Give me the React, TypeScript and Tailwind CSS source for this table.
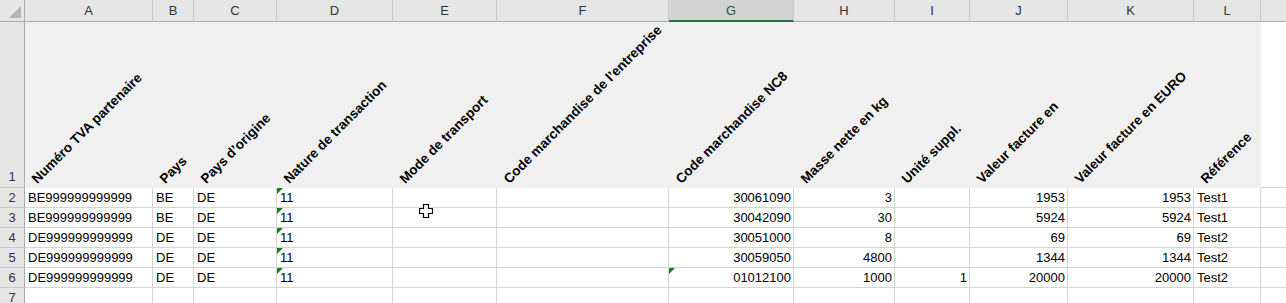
import React from "react";

type Col = { key: string; w: string; num?: boolean; label: string };

const cols: Col[] = [
  { key: "A", w: "w-[128px]", label: "Numéro TVA partenaire" },
  { key: "B", w: "w-[41px]", label: "Pays" },
  { key: "C", w: "w-[83px]", label: "Pays d’origine" },
  { key: "D", w: "w-[116px]", label: "Nature de transaction" },
  { key: "E", w: "w-[104px]", label: "Mode de transport" },
  { key: "F", w: "w-[172px]", label: "Code marchandise de l’entreprise" },
  { key: "G", w: "w-[125px]", num: true, label: "Code marchandise NC8" },
  { key: "H", w: "w-[101px]", num: true, label: "Masse nette en kg" },
  { key: "I", w: "w-[75px]", num: true, label: "Unité suppl." },
  { key: "J", w: "w-[98px]", num: true, label: "Valeur facture en" },
  { key: "K", w: "w-[126px]", num: true, label: "Valeur facture en EURO" },
  { key: "L", w: "w-[67px]", label: "Référence" },
];

const rows: string[][] = [
  ["BE999999999999", "BE", "DE", "11", "", "", "30061090", "3", "", "1953", "1953", "Test1"],
  ["BE999999999999", "BE", "DE", "11", "", "", "30042090", "30", "", "5924", "5924", "Test1"],
  ["DE999999999999", "DE", "DE", "11", "", "", "30051000", "8", "", "69", "69", "Test2"],
  ["DE999999999999", "DE", "DE", "11", "", "", "30059050", "4800", "", "1344", "1344", "Test2"],
  ["DE999999999999", "DE", "DE", "11", "", "", "01012100", "1000", "1", "20000", "20000", "Test2"],
  ["", "", "", "", "", "", "", "", "", "", "", ""],
];

// cells stored as text carry the little green error marker
const flagged = (r: number, c: number) => (c === 3 && r < 5) || (c === 6 && r === 4);

function Marker() {
  return (
    <span className="absolute left-0 top-0 h-0 w-0 border-t-[6px] border-r-[6px] border-t-[#1e7b1e] border-r-transparent" />
  );
}

function RowHead({ n, tall }: { n: number; tall?: boolean }) {
  return (
    <div
      className={`flex w-[25px] shrink-0 justify-center border-r border-b border-r-[#ababab] border-b-[#c8c8c8] bg-[#e6e6e6] text-[13px] text-[#333] ${
        tall ? "h-[166px] items-end pb-[1px]" : "h-[20px] items-center"
      }`}
    >
      {n}
    </div>
  );
}

export default function App() {
  return (
    <div className="relative h-[303px] w-[1286px] overflow-hidden bg-white font-['Liberation_Sans',Arial,sans-serif] text-black">
      {/* column letters */}
      <div className="flex h-[22px]">
        <div className="relative w-[25px] shrink-0 border-r border-b border-r-[#ababab] border-b-[#ababab] bg-[#e6e6e6]">
          <span className="absolute right-[3px] bottom-[3px] h-0 w-0 border-b-[12px] border-l-[12px] border-b-[#b4b4b4] border-l-transparent" />
        </div>
        {cols.map((c) =>
          c.key === "G" ? (
            <div
              key={c.key}
              className={`${c.w} flex shrink-0 items-center justify-center border-r border-b-2 border-r-[#c8c8c8] border-b-[#217346] bg-[#d2d2d2] pt-[1px] text-[13px] text-[#1b5e38]`}
            >
              {c.key}
            </div>
          ) : (
            <div
              key={c.key}
              className={`${c.w} flex shrink-0 items-center justify-center border-r border-b border-r-[#c8c8c8] border-b-[#ababab] bg-[#e6e6e6] text-[13px] text-[#333]`}
            >
              {c.key}
            </div>
          )
        )}
        <div className="flex-1 border-b border-b-[#ababab] bg-[#e6e6e6]" />
      </div>

      {/* row 1: rotated headings */}
      <div className="flex h-[166px]">
        <RowHead n={1} tall />
        {cols.map((c) => (
          <div key={c.key} className={`${c.w} relative shrink-0 bg-[#f0f0f0]`}>
            <span className="absolute bottom-[1px] left-[15px] z-10 origin-bottom-left -rotate-45 whitespace-nowrap text-[13.5px] leading-[16px] font-bold">
              {c.label}
            </span>
          </div>
        ))}
        <div className="flex-1 border-b border-b-[#d4d4d4]" />
      </div>

      {/* data rows */}
      {rows.map((r, ri) => (
        <div key={ri} className="flex h-[20px]">
          <RowHead n={ri + 2} />
          {cols.map((c, ci) => (
            <div
              key={c.key}
              className={`${c.w} relative flex shrink-0 items-center border-r border-b border-[#d4d4d4] text-[13px] leading-none ${
                c.num ? "justify-end pr-[2px]" : "pl-[3px]"
              }`}
            >
              {flagged(ri, ci) && <Marker />}
              {r[ci]}
            </div>
          ))}
          <div className="flex-1 border-b border-[#d4d4d4]" />
        </div>
      ))}

      {/* mouse pointer over E2 */}
      <svg className="absolute left-[419px] top-[204px]" width="14" height="14" viewBox="0 0 14 14">
        <path
          d="M4.5 0.5h5v4h4v5h-4v4h-5v-4h-4v-5h4z"
          fill="#fff"
          stroke="#000"
          strokeWidth="1.2"
        />
      </svg>
    </div>
  );
}
